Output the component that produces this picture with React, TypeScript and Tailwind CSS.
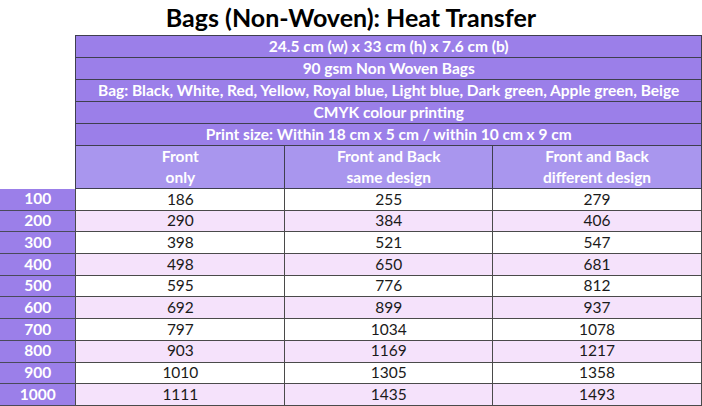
import React from "react";

const specs = [
  "24.5 cm (w) x 33 cm (h) x 7.6 cm (b)",
  "90 gsm Non Woven Bags",
  "Bag: Black, White, Red, Yellow, Royal blue, Light blue, Dark green, Apple green, Beige",
  "CMYK colour printing",
  "Print size: Within 18 cm x 5 cm / within 10 cm x 9 cm",
];

const rows: [string, string, string, string][] = [
  ["100", "186", "255", "279"],
  ["200", "290", "384", "406"],
  ["300", "398", "521", "547"],
  ["400", "498", "650", "681"],
  ["500", "595", "776", "812"],
  ["600", "692", "899", "937"],
  ["700", "797", "1034", "1078"],
  ["800", "903", "1169", "1217"],
  ["900", "1010", "1305", "1358"],
  ["1000", "1111", "1435", "1493"],
];

export default function App() {
  return (
    <div
      className="w-[702px] h-[406px] bg-white overflow-hidden"
      style={{ fontFamily: "Lato, 'Noto Sans', sans-serif" }}
    >
      <div className="h-[35px] flex items-center justify-center text-[25px] font-bold text-black leading-none">
        Bags (Non-Woven): Heat Transfer
      </div>
      <table className="table-fixed border-collapse text-[15.5px] leading-none">
        <colgroup>
          <col className="w-[76px]" />
          <col className="w-[209px]" />
          <col className="w-[208px]" />
          <col className="w-[209px]" />
        </colgroup>
        <tbody>
          {specs.map((s) => (
            <tr key={s} className="h-[22px]">
              <td className="p-0"></td>
              <td
                colSpan={3}
                className="p-0 border border-[#3f3f4f] bg-[#9b7fe9] text-white font-bold text-center"
              >
                {s}
              </td>
            </tr>
          ))}
          <tr className="h-[43px]">
            <td className="p-0"></td>
            <td className="p-0 border border-[#3f3f4f] bg-[#a996ee] text-white font-bold text-center leading-[21px]">
              Front
              <br />
              only
            </td>
            <td className="p-0 border border-[#3f3f4f] bg-[#a996ee] text-white font-bold text-center leading-[21px]">
              Front and Back
              <br />
              same design
            </td>
            <td className="p-0 border border-[#3f3f4f] bg-[#a996ee] text-white font-bold text-center leading-[21px]">
              Front and Back
              <br />
              different design
            </td>
          </tr>
          {rows.map((r, i) => (
            <tr key={r[0]} className="h-[21.7px]">
              <td className="p-0 border-b border-[#4a4a5a] bg-[#9b7fe9] text-white font-bold text-center">
                {r[0]}
              </td>
              {r.slice(1).map((v, j) => (
                <td
                  key={j}
                  className={`p-0 border border-[#4a4a4a] text-[#1a1a1a] text-center ${
                    i % 2 === 0 ? "bg-white" : "bg-[#f5e2fb]"
                  }`}
                >
                  {v}
                </td>
              ))}
            </tr>
          ))}
        </tbody>
      </table>
    </div>
  );
}
